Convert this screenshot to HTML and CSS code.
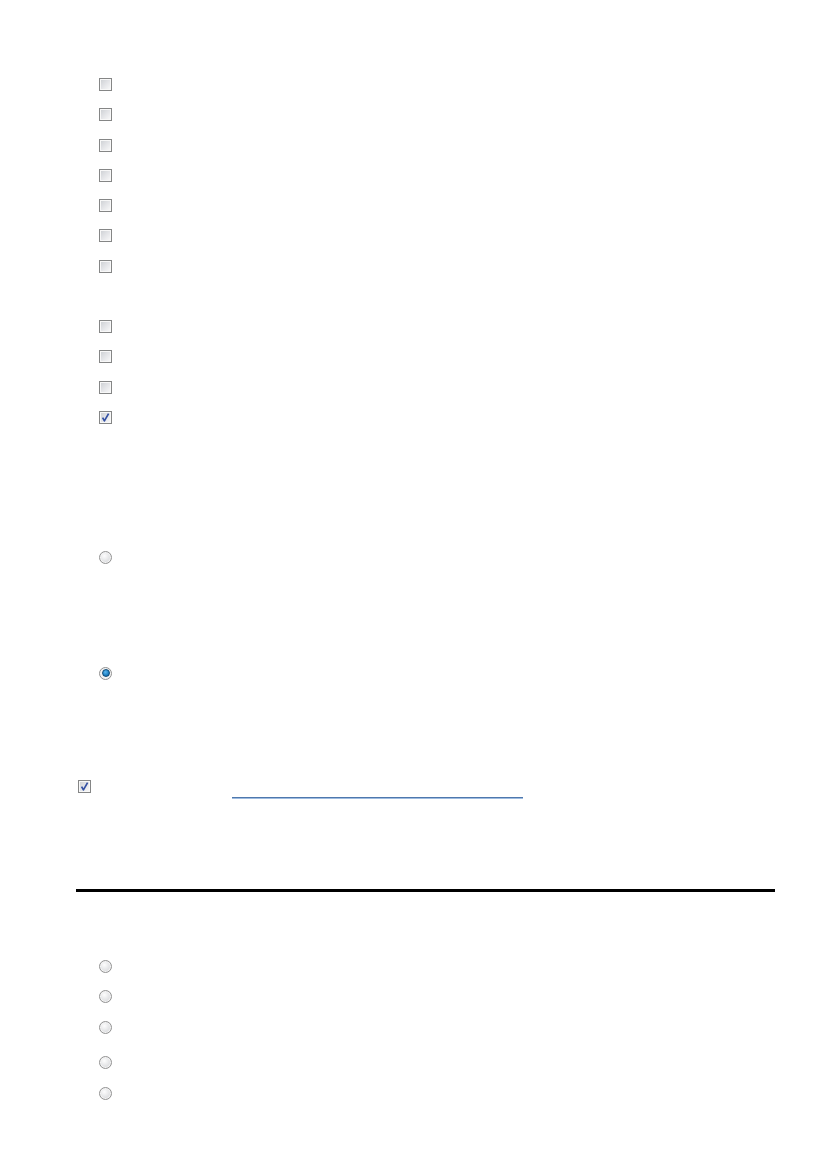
FILE: index.html
```html
<!DOCTYPE html>
<html lang="en">
  <head>
    <meta charset="UTF-8" />
    <meta name="viewport" content="width=device-width, initial-scale=1.0" />
    <title>Form</title>
    <link rel="stylesheet" href="styles.css">
  </head>
  <body>
    <div class="page">
      <ul class="opts">
        <li><span class="cb"></span></li>
        <li><span class="cb"></span></li>
        <li><span class="cb"></span></li>
        <li><span class="cb"></span></li>
        <li><span class="cb"></span></li>
        <li><span class="cb"></span></li>
        <li><span class="cb"></span></li>
      </ul>
      <ul class="opts second">
        <li><span class="cb"></span></li>
        <li><span class="cb"></span></li>
        <li><span class="cb"></span></li>
        <li>
          <span class="cb on">
            <svg viewBox="0 0 11 11" width="11" height="11"><path d="M2.6 5.6 L4.4 8.9 L8.6 1.6" fill="none" stroke="#3350a3" stroke-width="1.7" stroke-linejoin="round"/></svg>
          </span>
        </li>
      </ul>
      <div class="choice first"><span class="rb"></span></div>
      <div class="choice second"><span class="rb on"><i></i></span></div>
      <div class="agree">
        <span class="cb on">
          <svg viewBox="0 0 11 11" width="11" height="11"><path d="M2.6 5.6 L4.4 8.9 L8.6 1.6" fill="none" stroke="#3350a3" stroke-width="1.7" stroke-linejoin="round"/></svg>
        </span>
        <span class="link"></span>
      </div>
      <div class="rule"></div>
      <ul class="opts radios">
        <li><span class="rb"></span></li>
        <li class="step"><span class="rb"></span></li>
        <li class="wide"><span class="rb"></span></li>
        <li class="step"><span class="rb"></span></li>
        <li><span class="rb"></span></li>
      </ul>
    </div>
  </body>
</html>
```

FILE: styles.css
```css
* {
  margin: 0;
  padding: 0;
  box-sizing: border-box;
}
body {
  background: #fff;
  font-family: "Liberation Sans", Arial, sans-serif;
}
ul {
  list-style: none;
}
.page {
  display: flex;
  flex-direction: column;
  padding-top: 78px;
  padding-bottom: 60px;
}
.opts {
  display: flex;
  flex-direction: column;
  gap: 17.3px;
  padding-left: 99px;
}
.opts li {
  height: 13px;
  display: flex;
}
.opts.second {
  margin-top: 47.2px;
}
.opts.radios {
  margin-top: 68px;
  gap: 17px;
}
.opts.radios li.step {
  margin-bottom: 1px;
}
.opts.radios li.wide {
  margin-bottom: 5px;
}
/* checkbox */
.cb {
  display: inline-flex;
  align-items: center;
  justify-content: center;
  width: 13px;
  height: 13px;
  border: 1px solid #858686;
  box-shadow: inset 0 0 0 1px #f8f8f8;
  background: linear-gradient(135deg, #cbced2 0%, #e4e5e8 50%, #fbfbfb 100%);
}
.cb svg {
  display: block;
}
/* radio */
.rb {
  display: inline-flex;
  align-items: center;
  justify-content: center;
  width: 13px;
  height: 13px;
  border-radius: 50%;
  border: 1px solid #929292;
  box-shadow: inset 0 0 0 1px #f4f4f4;
  background: radial-gradient(circle at 40% 35%, #fdfdfd 0%, #e0e1e3 60%, #c8cacd 100%);
}
.rb.on {
  background: #f2f2f2;
}
.rb.on i {
  display: block;
  width: 8px;
  height: 8px;
  border-radius: 50%;
  border: 1px solid #0e4a77;
  background: radial-gradient(circle at 40% 35%, #5ab6ee 0%, #1d7fc2 60%, #0f5a93 100%);
}
.choice {
  padding-left: 99px;
  height: 13px;
  display: flex;
}
.choice.first {
  margin-top: 127.1px;
}
.choice.second {
  margin-top: 103px;
}
.agree {
  margin-top: 100px;
  padding-left: 78px;
  display: flex;
  align-items: flex-start;
  height: 19px;
}
.agree .link {
  display: block;
  margin-left: 141px;
  margin-top: 17px;
  width: 291px;
  height: 2px;
  border-top: 1px solid #4f78ad;
  border-bottom: 1px solid #9dbbe0;
}
.rule {
  margin: 90px 52px 0 76px;
  height: 3px;
  background: #000;
}
```
